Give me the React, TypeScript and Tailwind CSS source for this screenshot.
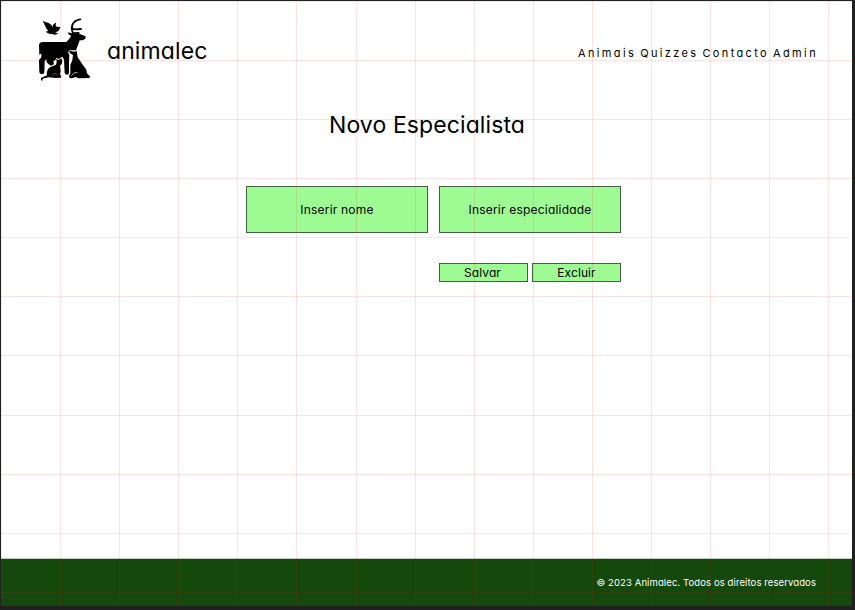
const columns = [1, 60, 119, 178, 237, 296, 356, 415, 474, 533, 592, 651, 710, 769, 828];
const rows = [1, 60, 119, 178, 237, 296, 355, 415, 474, 533, 592];

function GridOverlay() {
  return (
    <svg className="pointer-events-none absolute inset-0" width="853" height="606" shapeRendering="crispEdges" aria-hidden="true">
      {columns.map((x) => (
        <rect key={x} x={x} y="1" width="1" height="605" fill="#ff1020" fillOpacity="0.12" />
      ))}
      {rows.map((y) => (
        <rect key={y} x="1" y={y} width="852" height="1" fill="#ff1020" fillOpacity="0.12" />
      ))}
    </svg>
  );
}

function Logo() {
  return (
    <svg className="relative z-10 h-20 w-[70px] shrink-0" viewBox="0 0 210 240" aria-label="animalec">
      <path d="M38 32C46 37 59 37 65 46L70 54C66 45 71 40 79 38C75 44 77 51 83 50L91 51C88 62 83 66 74 67L84 70C79 76 71 75 66 71C59 73 53 70 48 65L55 62C48 57 45 44 38 32Z" />
      <path d="M129 70C122 54 124 32 151 28M127 55C133 61 141 57 153 57" fill="none" stroke="black" strokeWidth="5.5" strokeLinecap="round" />
      <path d="M114 67L124 70L132 67L148 66L148 71L157 75L167 79L166 86L158 91L149 91L144 105L138 121L119 121L114 127L118 134L117 157V189Q117 194 111 194Q105 194 104 189L102 150L98 141L91 143L87 147L79 144L76 150L70 154L72 163L63 167L56 163L50 157L49 148L44 154L43 187Q42 193 35 193Q28 192 28 186L27 150L34 142L34 130L28 135L27 105Q28 96 39 96H109L120 84L123 77L115 72Z" />
      <path d="M79 147L86 150L94 145L97 154L95 162L90 167L92 184L90 194L94 198L92 203L76 204L57 202L44 204L38 207L37 213L33 210L33 204L44 199L51 196C49 184 54 171 70 168L78 164L80 157Z" />
      <path d="M118 122L133 125L140 123L143 142L154 158L169 179L171 190L180 199L179 204L145 205L138 201L125 205L118 203L117 197L121 191L121 165L127 151L129 135L119 129Z" />
      <path d="M124 197Q133 184 143 188" fill="none" stroke="white" strokeWidth="2" />
      <path d="M66 196Q76 185 83 195" fill="none" stroke="white" strokeWidth="1" />
    </svg>
  );
}

export default function App() {
  return (
    <div className="relative h-[610px] w-[855px] overflow-hidden bg-[#202020] pt-px pl-px font-['Inter','Liberation_Sans',sans-serif] text-black [font-feature-settings:'cv11']">
      <div className="flex h-[605px] w-[851px] flex-col bg-white">
        <header className="flex h-[98px] items-start pl-[29px] pt-[9px]">
          <Logo />
          <span className="ml-[7px] mt-[26px] text-[23px] leading-[30px] tracking-[0.1px]">animalec</span>
          <nav className="ml-auto mr-[34px] mt-[33px] flex gap-[4px] whitespace-nowrap text-[11px] leading-5 tracking-[2.36px]">
            <a>Animais</a><a>Quizzes</a><a>Contacto</a><a>Admin</a>
          </nav>
        </header>
        <main className="flex-1 pt-[9px]">
          <h1 className="pl-px text-center text-[23px] leading-[34px] tracking-[0.1px]">Novo Especialista</h1>
          <form className="ml-[245px] mt-[44px] w-[375px]">
            <div className="flex gap-[11px]">
              <div className="flex h-[47px] w-[182px] items-center justify-center border border-[#426242] bg-[#9efa93] text-xs tracking-[0.2px]">Inserir nome</div>
              <div className="flex h-[47px] w-[182px] items-center justify-center border border-[#426242] bg-[#9efa93] text-xs tracking-[0.2px]">Inserir especialidade</div>
            </div>
            <div className="mt-[30px] flex justify-end gap-1">
              <button type="button" className="h-[19px] w-[89px] border border-[#426242] bg-[#9efa93] pr-0.5 text-xs leading-[17px] tracking-[0.1px]">Salvar</button>
              <button type="button" className="h-[19px] w-[89px] border border-[#426242] bg-[#9efa93] text-xs leading-[17px] tracking-[0.1px]">Excluir</button>
            </div>
          </form>
        </main>
        <footer className="flex h-12 items-center justify-end border-t border-[#bcccb8] bg-[#15480c] pr-9 pt-0.5 text-[9.5px] tracking-[0.1px] text-white">
          © 2023 Animalec. Todos os direitos reservados
        </footer>
      </div>
      <GridOverlay />
    </div>
  );
}
